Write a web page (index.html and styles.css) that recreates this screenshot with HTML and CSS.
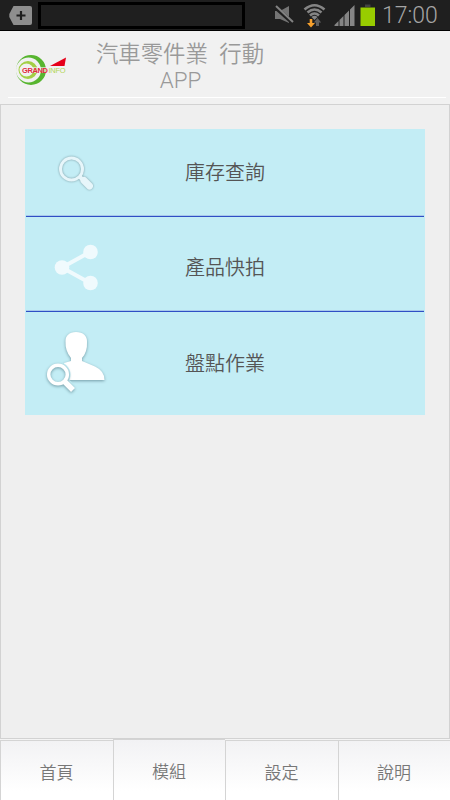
FILE: index.html
```html
<!DOCTYPE html>
<html lang="zh-Hant">
<head>
<meta charset="utf-8">
<title>汽車零件業 行動 APP</title>
<link rel="stylesheet" href="styles.css">
</head>
<body>
<div class="status">
  <svg class="tag" width="24" height="20" viewBox="0 0 24 20"><path d="M4.500 0H21Q23 0 23 2V17Q23 19 21 19H4.500L.3 11V8Z" fill="#8e8e8e"/><path d="M12 5V14M7.500 9.500H16.500" stroke="#1f1f1f" stroke-width="2.200"/></svg>
  <div class="slot"></div>
  <svg class="tray" width="102" height="30" viewBox="0 0 102 30">
    <path d="M0 11H5L14 6V23L5 19H0Z" fill="#747474"/><path d="M0 7L18 23" stroke="#1f1f1f" stroke-width="4"/><path d="M1 6L18 22" stroke="#828282" stroke-width="2"/>
    <g fill="none" stroke="#858585" stroke-width="2.600"><path d="M29.500 9.500Q39.500 1 49.500 9.500M32.500 12.500Q39.500 6.500 46.500 12.500M35 15.500Q39.500 11.500 44 15.500"/></g><path d="M36.500 17Q39.500 14.500 42.500 17L39.500 20Z" fill="#858585"/>
    <path d="M34.700 19H37.300V23H40L36 27.500L32 23H34.700Z" fill="#f6a02d"/><path d="M41 26V22.500H38.800L42.500 18L46.200 22.500H44V26Z" fill="#5f5f5f"/>
    <path d="M59.500 26V25L63.500 21V26ZM64.500 26V20L68.500 16V26ZM69.500 26V15L74 10.500V26ZM75 26V9.500L79.500 5V26Z" fill="#858585"/>
    <path d="M90 4.500H95.500V7H90Z" fill="#434343"/><path d="M85.500 7.500H100V26H85.500Z" fill="#98cc00"/>
  </svg>
  <span class="clock">17:00</span>
</div>
<header class="header">
  <svg class="logo" width="54" height="34" viewBox="0 0 54 34">
    <path fill-rule="evenodd" fill="#57b52f" d="M16 2A15 15 0 1 1 16 32A15 15 0 1 1 16 2ZM13.500 4.500A12.500 12.500 0 1 0 13.500 29.500A12.500 12.500 0 1 0 13.500 4.500Z"/>
    <path fill-rule="evenodd" fill="#a3cf45" d="M13 8A9.500 9 0 1 1 13 26A9.500 9 0 1 1 13 8ZM11.500 10.500A7 6.500 0 1 0 11.500 23.500A7 6.500 0 1 0 11.500 10.500Z"/>
    <path d="M35 13L51 4.500L49.500 13Z" fill="#e60019"/>
    <path d="M7 14H32V20H7Z" fill="#f2f2f2" fill-opacity=".65"/>
    <text class="brand" x="7" y="19.700" textLength="26" fill="#e22a3c">GRAND</text><text class="brand thin" x="33.500" y="19.700" textLength="17" fill="#b2d655">INFO</text>
  </svg>
  <h1 class="title">汽車零件業 <span class="word">行動</span><br><span class="latin">APP</span></h1>
</header>
<main class="panel">
  <ul class="menu">
    <li class="item"><svg class="icon" width="80" height="84" viewBox="0 0 80 84"><g class="glow"><circle cx="26.500" cy="38" r="11" fill="none" stroke="#e7f6fa" stroke-width="3"/><path d="M34.500 45.500L37 48" stroke="#e7f6fa" stroke-width="4"/><path d="M39 49.500L44.500 55" stroke="#e7f6fa" stroke-width="7" stroke-linecap="round"/></g></svg><span class="label">庫存查詢</span></li>
    <li class="item second"><svg class="icon" width="80" height="84" viewBox="0 0 80 84"><g fill="#f0fafd"><path d="M45 26L17 41.500L45 57" fill="none" stroke="#f0fafd" stroke-width="4"/><circle cx="45.500" cy="26" r="7.300"/><circle cx="17" cy="41.500" r="7.300"/><circle cx="45.500" cy="57" r="7.300"/></g></svg><span class="label">產品快拍</span></li>
    <li class="item"><svg class="icon" width="80" height="84" viewBox="0 0 80 84"><path class="shade" d="M31 10C38 10 42.500 14 42 20Q42.500 30 37 36V39L50 44.500Q59.500 49 59.500 58H19V41L26 39V36Q20 29 20.500 19C20.500 14 24 10 31 10Z" fill="#fff"/><circle cx="13" cy="52.500" r="12.500" fill="#c3edf5"/><path d="M21 60L28 67" stroke="#c3edf5" stroke-width="8"/><g class="shade"><circle cx="13" cy="52.500" r="9.300" fill="none" stroke="#fff" stroke-width="3.500"/><path d="M19.500 59.500L28 68" stroke="#fff" stroke-width="5.500"/></g></svg><span class="label">盤點作業</span></li>
  </ul>
</main>
<nav class="tabs">
  <a class="tab">首頁</a>
  <a class="tab active">模組</a>
  <a class="tab">設定</a>
  <a class="tab">說明</a>
</nav>
</body>
</html>
```

FILE: styles.css
```css
* { box-sizing: border-box; }
body {
  margin: 0;
  width: 450px;
  height: 800px;
  overflow: hidden;
  display: flex;
  flex-direction: column;
  background: #f0f0f0;
  font-family: Roboto, "Noto Sans CJK TC", sans-serif;
  font-weight: 350;
}
.status {
  height: 31px;
  flex: none;
  display: flex;
  align-items: flex-start;
  background: #1f1f1f;
  border-bottom: 1px solid #000;
}
.tag { margin: 6px 0 0 9px; }
.slot {
  width: 207px;
  height: 27px;
  margin: 2px 30px 0 5px;
  border: 3px solid #000;
}
.tray { flex: none; }
.clock {
  margin-left: 5px;
  font-size: 23px;
  font-weight: 300;
  line-height: 31px;
  color: #a5a5a5;
}
.header {
  height: 73px;
  flex: none;
  display: flex;
  background: linear-gradient(#fff, #fff) 8px 66px / 438px 1px no-repeat #f1f1f1;
}
.logo { margin: 22px 0 0 15px; }
.brand { font: bold 7.5px "Liberation Sans", sans-serif; }
.thin { font-weight: normal; }
.title {
  width: 222px;
  margin: 10px 0 0;
  font-size: 22.4px;
  line-height: 26px;
  font-weight: 350;
  text-align: center;
  color: #999;
  white-space: nowrap;
}
.word { margin-left: 6px; }
.latin { font-weight: 350; margin-left: 1px; }
.panel {
  height: 635px;
  flex: none;
  border: 1px solid #d2d2d2;
  padding: 24px;
  background: #efefef;
}
.menu {
  list-style: none;
  margin: 0;
  padding: 0;
  height: 286px;
  background: #c3edf5;
}
.item {
  height: 95px;
  display: flex;
  align-items: center;
  margin: 0 1px;
  border-bottom: 1px solid #2f4fc5;
  box-shadow: inset 0 -1px #a8c9eb;
}
.item:first-child { height: 88px; }
.second { padding-top: 8px; }
.item:last-child { height: 103px; border: 0; box-shadow: none; }
.icon { margin-left: 19px; overflow: visible; }
.label {
  margin-left: 60px;
  font-size: 20px;
  line-height: 30px;
  color: #555;
}
.glow { filter: drop-shadow(0 0 1px #7899a1); }
.shade { filter: drop-shadow(0 1px 1.5px #729ba6); }
.tabs {
  flex: 1;
  display: grid;
  grid-template-columns: 113px 112px 113px 112px;
  padding-top: 1px;
  background: #f4f4f4;
}
.tab {
  display: flex;
  align-items: center;
  justify-content: center;
  padding: 1px 1px 0 0;
  border-top: 1px solid #d4d4d4;
  border-left: 1px solid #d4d4d4;
  background: linear-gradient(#f2f2f4, #fff 85%);
  font-size: 17px;
  color: #777;
}
.active { margin-top: -1px; }
```
